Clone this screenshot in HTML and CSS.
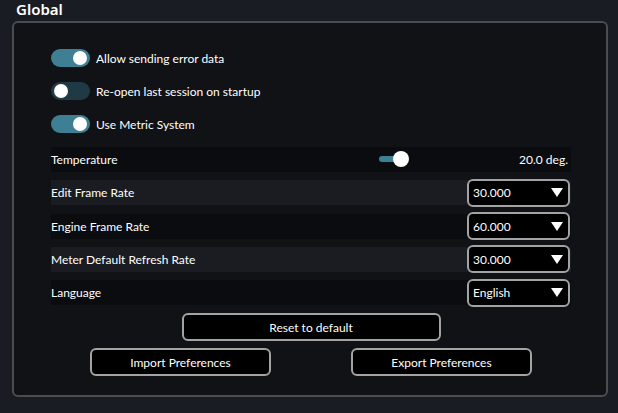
FILE: index.html
```html
<!DOCTYPE html>
<html>
<head>
<meta charset="utf-8">
<link rel="stylesheet" href="styles.css">
</head>
<body>
<div class="title">Global</div>
<div class="panel">
  <div class="toggles">
    <div class="toggle-row"><span class="switch on"><span class="knob"></span></span><span class="tlabel">Allow sending error data</span></div>
    <div class="toggle-row"><span class="switch off"><span class="knob"></span></span><span class="tlabel">Re-open last session on startup</span></div>
    <div class="toggle-row"><span class="switch on"><span class="knob"></span></span><span class="tlabel">Use Metric System</span></div>
  </div>
  <div class="rows">
    <div class="row dark">
      <span class="rlabel">Temperature</span>
      <span class="slider"><span class="track"></span><span class="sknob"></span></span>
      <span class="value">20.0 deg.</span>
    </div>
    <div class="row light">
      <span class="rlabel">Edit Frame Rate</span>
      <span class="select"><span>30.000</span><svg width="12" height="9" viewBox="0 0 12 9"><path d="M0 0H12L6 9Z" fill="#fff"/></svg></span>
    </div>
    <div class="row dark">
      <span class="rlabel">Engine Frame Rate</span>
      <span class="select"><span>60.000</span><svg width="12" height="9" viewBox="0 0 12 9"><path d="M0 0H12L6 9Z" fill="#fff"/></svg></span>
    </div>
    <div class="row light">
      <span class="rlabel">Meter Default Refresh Rate</span>
      <span class="select"><span>30.000</span><svg width="12" height="9" viewBox="0 0 12 9"><path d="M0 0H12L6 9Z" fill="#fff"/></svg></span>
    </div>
    <div class="row dark">
      <span class="rlabel">Language</span>
      <span class="select"><span>English</span><svg width="12" height="9" viewBox="0 0 12 9"><path d="M0 0H12L6 9Z" fill="#fff"/></svg></span>
    </div>
  </div>
  <div class="btns">
    <button class="btn reset">Reset to default</button>
    <div class="btn-pair">
      <button class="btn half">Import Preferences</button>
      <button class="btn half">Export Preferences</button>
    </div>
  </div>
</div>
</body>
</html>
```
FILE: styles.css
```css
html, body {
  margin: 0;
  padding: 0;
}
body {
  width: 618px;
  height: 413px;
  background: #1a1c23;
  font-family: Lato, "Noto Sans", sans-serif;
  color: #fff;
  overflow: hidden;
}
.title {
  height: 21px;
  padding-left: 16px;
  font-family: "Noto Sans", sans-serif;
  font-size: 15px;
  font-weight: 600;
  line-height: 19px;
}
.panel {
  margin-left: 12px;
  height: 372px;
  border: 2px solid #4a4c50;
  border-radius: 6px;
  background: #111216;
  padding-left: 37px;
  box-sizing: content-box;
  width: 555px;
}
.toggles {
  padding-top: 26px;
  display: flex;
  flex-direction: column;
  gap: 15px;
}
.toggle-row {
  display: flex;
  align-items: center;
  height: 18px;
  gap: 6px;
}
.switch {
  width: 39px;
  height: 18px;
  border-radius: 9px;
  position: relative;
  flex: none;
}
.switch.on { background: #3e7f93; }
.switch.off { background: #1f3a45; }
.knob {
  position: absolute;
  top: 2px;
  width: 14px;
  height: 14px;
  border-radius: 50%;
  background: #fff;
}
.switch.on .knob { right: 3px; }
.switch.off .knob { left: 3px; }
.tlabel {
  font-size: 12px;
}
.rows {
  margin-top: 14px;
  width: 520px;
  display: flex;
  flex-direction: column;
  gap: 8.33px;
}
.row {
  height: 25px;
  display: flex;
  align-items: center;
  font-size: 12px;
  position: relative;
}
.row.dark { background: #0b0c0f; }
.row.light { background: #1a1c22; }
.rlabel { flex: 1; }
.slider {
  position: absolute;
  left: 328px;
  top: 4px;
  width: 30px;
  height: 16px;
}
.track {
  position: absolute;
  left: 0;
  top: 5px;
  width: 20px;
  height: 6px;
  border-radius: 3px;
  background: #3e7f93;
}
.sknob {
  position: absolute;
  left: 14px;
  top: 0;
  width: 16px;
  height: 16px;
  border-radius: 50%;
  background: #fff;
}
.value {
  padding-right: 3px;
}
.select {
  width: 103px;
  height: 28px;
  margin: -1.5px 1px -1.5px 0;
  box-sizing: border-box;
  border: 2px solid #a3a3a3;
  border-radius: 6px;
  background: #000;
  display: flex;
  align-items: center;
  justify-content: space-between;
  padding: 0 5px 0 4px;
}
.btns {
  margin-top: 8px;
  display: flex;
  flex-direction: column;
  align-items: center;
  gap: 7px;
  width: 520px;
}
.btn {
  height: 28px;
  box-sizing: border-box;
  border: 2px solid #a3a3a3;
  border-radius: 6px;
  background: #000;
  color: #fff;
  font-family: inherit;
  font-size: 12px;
  padding: 0;
}
.reset {
  width: 259px;
}
.btn-pair {
  display: flex;
  gap: 80px;
}
.half {
  width: 181px;
}
```
